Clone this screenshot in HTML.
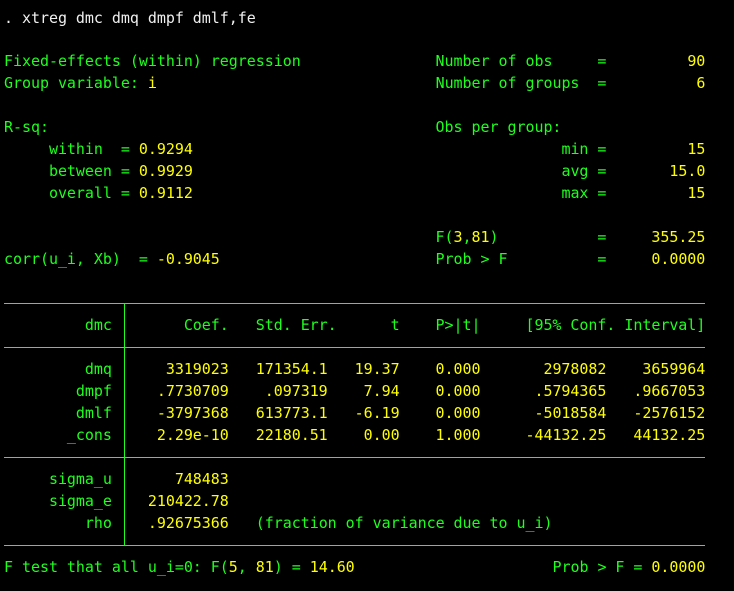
<!DOCTYPE html>
<html><head><meta charset="utf-8"><style>
html,body{margin:0;padding:0;background:#000;width:734px;height:591px;overflow:hidden}
.l{position:absolute;left:4px;height:22px;line-height:22px;font-family:"DejaVu Sans Mono","Liberation Mono",monospace;font-size:15px;letter-spacing:-0.04px;white-space:pre;color:#1eff1e}
.y{color:#ffff00}.w{color:#f0f0f0}
.h{position:absolute;left:4px;width:701px;height:1px;background:#1eff1e}
.v{position:absolute;left:124px;width:1px;top:303px;height:243px;background:#1eff1e}
</style></head><body>
<div class="l w" style="top:7px">. xtreg dmc dmq dmpf dmlf,fe</div>
<div class="l" style="top:50px">Fixed-effects (within) regression               Number of obs     =         <span class="y">90</span></div>
<div class="l" style="top:72px">Group variable: <span class="y">i</span>                               Number of groups  =          <span class="y">6</span></div>
<div class="l" style="top:116px">R-sq:                                           Obs per group:</div>
<div class="l" style="top:138px">     within  = <span class="y">0.9294</span>                                         min =         <span class="y">15</span></div>
<div class="l" style="top:160px">     between = <span class="y">0.9929</span>                                         avg =       <span class="y">15.0</span></div>
<div class="l" style="top:182px">     overall = <span class="y">0.9112</span>                                         max =         <span class="y">15</span></div>
<div class="l" style="top:226px">                                                F(<span class="y">3</span>,<span class="y">81</span>)           =     <span class="y">355.25</span></div>
<div class="l" style="top:248px">corr(u_i, Xb)  = <span class="y">-0.9045</span>                        Prob &gt; F          =     <span class="y">0.0000</span></div>
<div class="h" style="top:303px"></div>
<div class="l" style="top:314px">         dmc        Coef.   Std. Err.      t    P&gt;|t|     [95% Conf. Interval]</div>
<div class="h" style="top:347px"></div>
<div class="l" style="top:358px">         dmq  <span class="y">    3319023   171354.1   19.37    0.000       2978082    3659964</span></div>
<div class="l" style="top:380px">        dmpf  <span class="y">   .7730709    .097319    7.94    0.000      .5794365   .9667053</span></div>
<div class="l" style="top:402px">        dmlf  <span class="y">   -3797368   613773.1   -6.19    0.000      -5018584   -2576152</span></div>
<div class="l" style="top:424px">       _cons  <span class="y">   2.29e-10   22180.51    0.00    1.000     -44132.25   44132.25</span></div>
<div class="h" style="top:457px"></div>
<div class="l" style="top:468px">     sigma_u  <span class="y">     748483</span></div>
<div class="l" style="top:490px">     sigma_e  <span class="y">  210422.78</span></div>
<div class="l" style="top:512px">         rho  <span class="y">  .92675366</span>   (fraction of variance due to u_i)</div>
<div class="h" style="top:545px"></div>
<div class="v"></div>
<div class="l" style="top:556px">F test that all u_i=0: F(<span class="y">5</span>, <span class="y">81</span>) = <span class="y">14.60</span>                      Prob &gt; F = <span class="y">0.0000</span></div>
</body></html>
